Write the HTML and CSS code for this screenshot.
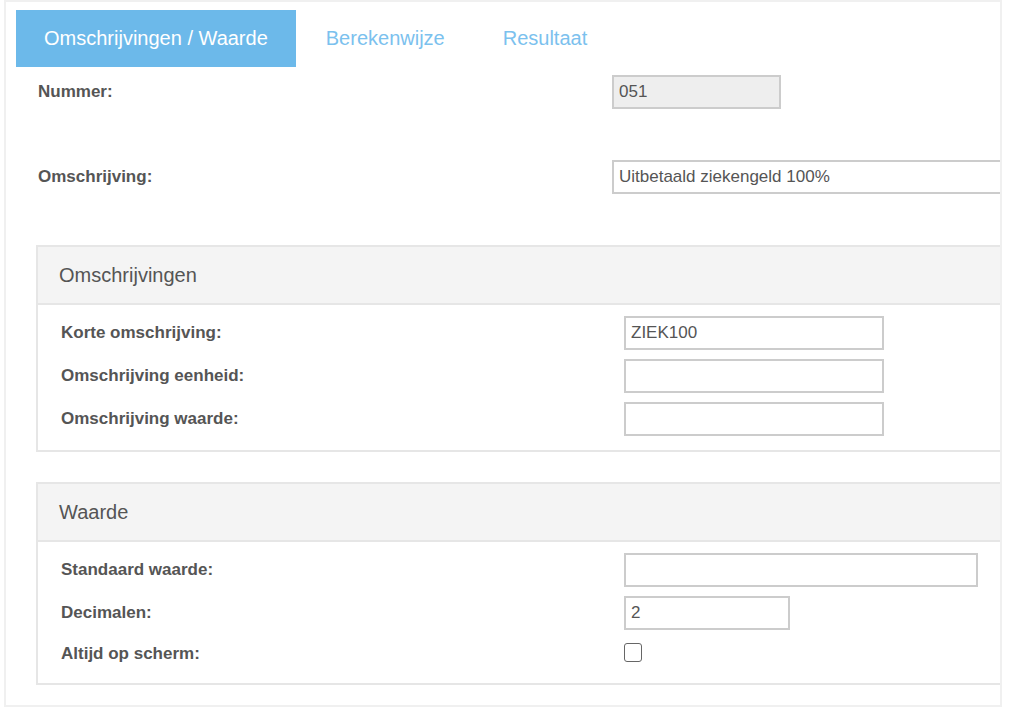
FILE: index.html
```html
<!DOCTYPE html>
<html lang="nl">
<head>
  <meta charset="UTF-8">
  <title>Looncomponent</title>
  <link rel="stylesheet" href="styles.css">
</head>
<body>

  <div class="page">
    <!-- Tabs -->
    <ul class="tabs">
      <li class="active">Omschrijvingen / Waarde</li>
      <li>Berekenwijze</li>
      <li>Resultaat</li>
    </ul>

    <div class="form-top">
      <div class="form-row">
        <label>Nummer:</label>
        <input type="text" class="input-nummer" value="051" readonly>
      </div>
      <div class="form-row">
        <label>Omschrijving:</label>
        <input type="text" class="input-wide" value="Uitbetaald ziekengeld 100%">
      </div>
    </div>

    <div class="panel">
      <div class="panel-heading">Omschrijvingen</div>
      <div class="panel-body">
        <div class="form-row">
          <label>Korte omschrijving:</label>
          <input type="text" class="input-mid" value="ZIEK100">
        </div>
        <div class="form-row">
          <label>Omschrijving eenheid:</label>
          <input type="text" class="input-mid">
        </div>
        <div class="form-row">
          <label>Omschrijving waarde:</label>
          <input type="text" class="input-mid">
        </div>
      </div>
    </div>

    <div class="panel panel-waarde">
      <div class="panel-heading">Waarde</div>
      <div class="panel-body">
        <div class="form-row">
          <label>Standaard waarde:</label>
          <input type="text" class="input-long">
        </div>
        <div class="form-row">
          <label>Decimalen:</label>
          <input type="text" class="input-small" value="2">
        </div>
        <div class="form-row check-row">
          <label>Altijd op scherm:</label>
          <input type="checkbox" class="check">
        </div>
      </div>
    </div>
  </div>

</body>
</html>
```

FILE: styles.css
```css
* {
  margin: 0;
  padding: 0;
  box-sizing: border-box;
}

body {
  font-family: "Liberation Sans", Arial, sans-serif;
  background-color: #fff;
  color: #555;
}

.page {
  width: 998px;
  height: 707px;
  margin-left: 4px;
  border: 2px solid #f0f0f0;
  padding: 8px 0 0 10px;
  overflow: hidden;
}

.tabs {
  list-style: none;
  display: flex;
  gap: 2px;
}

.tabs li {
  height: 57px;
  line-height: 57px;
  padding: 0 28px;
  font-size: 20px;
  color: #7bc1ee;
  cursor: pointer;
}

.tabs li.active {
  background-color: #6cb9ea;
  color: #fff;
}

.form-row {
  display: flex;
  align-items: center;
  height: 34px;
}

.form-row label {
  flex-shrink: 0;
  font-size: 17px;
  font-weight: bold;
  color: #555;
}

.form-row input {
  flex-shrink: 0;
}

.form-top {
  padding: 8px 0 0 22px;
  display: flex;
  flex-direction: column;
  gap: 51px;
}

.form-top label {
  width: 574px;
}

input[type="text"] {
  height: 34px;
  border: 2px solid #ccc;
  font-family: "Liberation Sans", Arial, sans-serif;
  font-size: 17px;
  color: #555;
  padding: 0 5px;
  outline: none;
}

.input-nummer {
  width: 169px;
  background-color: #eee;
}

.input-wide {
  width: 420px;
}

.input-mid {
  width: 260px;
}

.input-long {
  width: 354px;
}

.input-small {
  width: 166px;
}

.panel {
  width: 1000px;
  margin: 51px 0 0 20px;
  border: 2px solid #e6e6e6;
}

.panel-waarde {
  margin-top: 30px;
}

.panel-heading {
  height: 58px;
  line-height: 56px;
  padding-left: 21px;
  font-size: 20px;
  color: #555;
  background-color: #f4f4f4;
  border-bottom: 2px solid #e6e6e6;
}

.panel-body {
  padding: 11px 0 14px 23px;
  display: flex;
  flex-direction: column;
  gap: 9px;
}

.panel-body label {
  width: 563px;
}

.check-row {
  height: 30px;
}

.check {
  appearance: none;
  width: 18px;
  height: 19px;
  border: 1px solid #666;
  border-radius: 3px;
  background: #fff;
  margin-top: -3px;
}
```
